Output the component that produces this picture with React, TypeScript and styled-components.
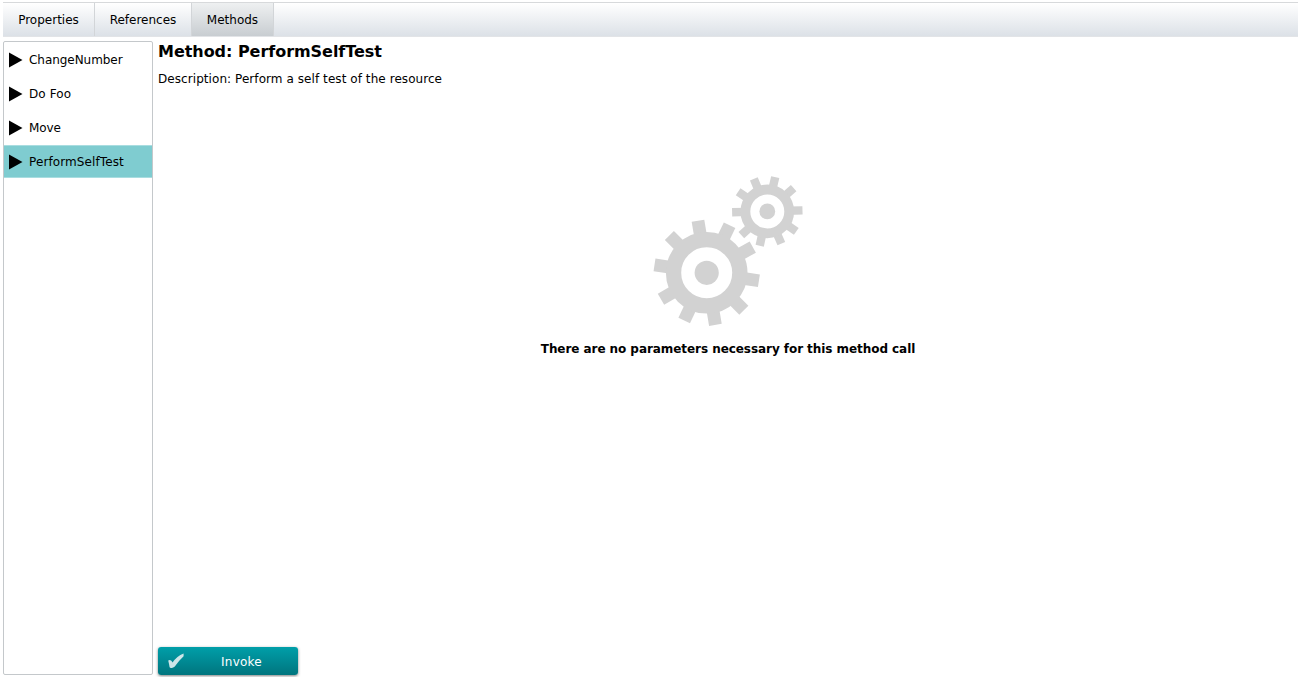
import React from "react";
import styled, { createGlobalStyle } from "styled-components";

const GlobalStyle = createGlobalStyle`
  * { box-sizing: border-box; }
  body {
    margin: 0;
    background: #fff;
    color: #000;
    font-family: "DejaVu Sans", Verdana, sans-serif;
    font-size: 12px;
    overflow: hidden;
  }
`;

const Page = styled.div`
  display: flex;
  flex-direction: column;
  height: 677px;
  padding: 2px 3px 2px;
`;

const TabBar = styled.nav`
  display: flex;
  flex: none;
  height: 35px;
  border-top: 1px solid #d7d9db;
  border-bottom: 1px solid #e2e4e7;
  background: linear-gradient(#fff, #dce1e7);
`;

const Tab = styled.button<{ $width: number; $active?: boolean }>`
  width: ${(p) => p.$width}px;
  padding: 0;
  border: 0;
  border-right: 1px solid #d2d5d8;
  background: ${(p) => (p.$active ? "linear-gradient(#eef0f1, #c8cdd1)" : "transparent")};
  font: inherit;
  color: inherit;
`;

const Label = styled.span<{ $spacing?: number }>`
  letter-spacing: ${(p) => p.$spacing ?? 0}px;
  white-space: nowrap;
`;

const Body = styled.div`
  display: flex;
  flex: 1;
  margin-top: 4px;
  gap: 5px;
`;

const MethodList = styled.ul`
  display: flex;
  flex-direction: column;
  gap: 1px;
  width: 150px;
  margin: 0;
  padding: 1px 0;
  border: 1px solid #c4c8cb;
  border-radius: 2px;
  list-style: none;
`;

const MethodRow = styled.li<{ $selected?: boolean }>`
  display: flex;
  align-items: center;
  height: 33px;
  padding-left: 5px;
  gap: 6px;
  border: solid ${(p) => (p.$selected ? "#a9dde0" : "transparent")};
  border-width: 1px 0;
  background: ${(p) => (p.$selected ? "#7fccd0" : "transparent")};
`;

const Content = styled.main`
  display: flex;
  flex: 1;
  flex-direction: column;
`;

const Title = styled.h1`
  margin: 1px 0 0;
  font-size: 16px;
  line-height: 20px;
`;

const Description = styled.p`
  margin: 9px 0 0;
  line-height: 16px;
`;

const EmptyState = styled.div`
  display: flex;
  flex: 1;
  flex-direction: column;
  align-items: center;
  padding: 89px 0 0;
`;

const EmptyText = styled.strong`
  margin-top: 13px;
  line-height: 18px;
`;

const InvokeButton = styled.button`
  display: flex;
  align-items: center;
  width: 140px;
  height: 28px;
  padding: 0 0 0 9px;
  border: 0;
  border-radius: 3px;
  background: linear-gradient(#009fa9, #00757e);
  box-shadow: 0 1px 3px rgba(0, 0, 0, 0.5);
  color: #fff;
  font: 12px "DejaVu Sans", Verdana, sans-serif;
`;

const ButtonLabel = styled.span`
  flex: 1;
  padding: 2px 0 0;
  letter-spacing: 0.25px;
  text-align: center;
`;

type GearProps = {
  cx: number;
  cy: number;
  outer: number;
  body: number;
  ring: number;
  hub: number;
  tooth: number;
  angles: number[];
};

const Gear = ({ cx, cy, outer, body, ring, hub, tooth, angles }: GearProps) => (
  <g transform={`translate(${cx} ${cy})`} fill="#d2d2d2">
    {angles.map((a) => (
      <rect key={a} x={-tooth / 2} y={-outer} width={tooth} height={outer - ring - 3} transform={`rotate(${a})`} />
    ))}
    <circle r={(body + ring) / 2} fill="none" stroke="#d2d2d2" strokeWidth={body - ring} />
    <circle r={hub} />
  </g>
);

const Gears = () => (
  <svg width="150" height="151" viewBox="653 176 150 151">
    <Gear cx={706.7} cy={272.8} outer={52.8} body={40.8} ring={25.5} hub={12.1} tooth={12.8}
      angles={[-9.5, 25.7, 60.8, 98.7, 135.3, 170.5, 205.2, 240, 278.7, 315]} />
    <Gear cx={767.3} cy={211.4} outer={35.2} body={26.8} ring={17} hub={7.9} tooth={8.4}
      angles={[13, 48.5, 88.3, 124.5, 156.5, 192.5, 227.5, 268.5, 304, 337.5]} />
  </svg>
);

const Arrow = () => (
  <svg width="14" height="16" viewBox="0 0 14 16">
    <path d="M0 0.5 13.5 8 0 15.5Z" />
  </svg>
);

const Check = () => (
  <svg width="18" height="18" viewBox="0 0 18 18">
    <path d="M1.2 8.4Q4.2 6.9 5.6 10.6Q9.8 4.2 16.6 1.6V4.2Q11.8 8.6 7.8 14.6Q5 17.2 2.6 15.2Q2 11.5 1.2 8.4Z" fill="#cde5e8" />
  </svg>
);

const methods = [
  { name: "ChangeNumber", spacing: -0.05 },
  { name: "Do Foo", spacing: 0.1 },
  { name: "Move", spacing: -0.1 },
  { name: "PerformSelfTest", spacing: 0.1 },
];

export default function App() {
  return (
    <>
      <GlobalStyle />
      <Page>
        <TabBar>
          <Tab $width={92}><Label>Properties</Label></Tab>
          <Tab $width={97}><Label>References</Label></Tab>
          <Tab $width={82} $active><Label>Methods</Label></Tab>
        </TabBar>
        <Body>
          <MethodList>
            {methods.map((m) => (
              <MethodRow key={m.name} $selected={m.name === "PerformSelfTest"}>
                <Arrow />
                <Label $spacing={m.spacing}>{m.name}</Label>
              </MethodRow>
            ))}
          </MethodList>
          <Content>
            <Title><Label $spacing={-0.04}>Method: PerformSelfTest</Label></Title>
            <Description><Label $spacing={0.065}>Description: Perform a self test of the resource</Label></Description>
            <EmptyState>
              <Gears />
              <EmptyText><Label $spacing={-0.06}>There are no parameters necessary for this method call</Label></EmptyText>
            </EmptyState>
            <InvokeButton>
              <Check />
              <ButtonLabel>Invoke</ButtonLabel>
            </InvokeButton>
          </Content>
        </Body>
      </Page>
    </>
  );
}
